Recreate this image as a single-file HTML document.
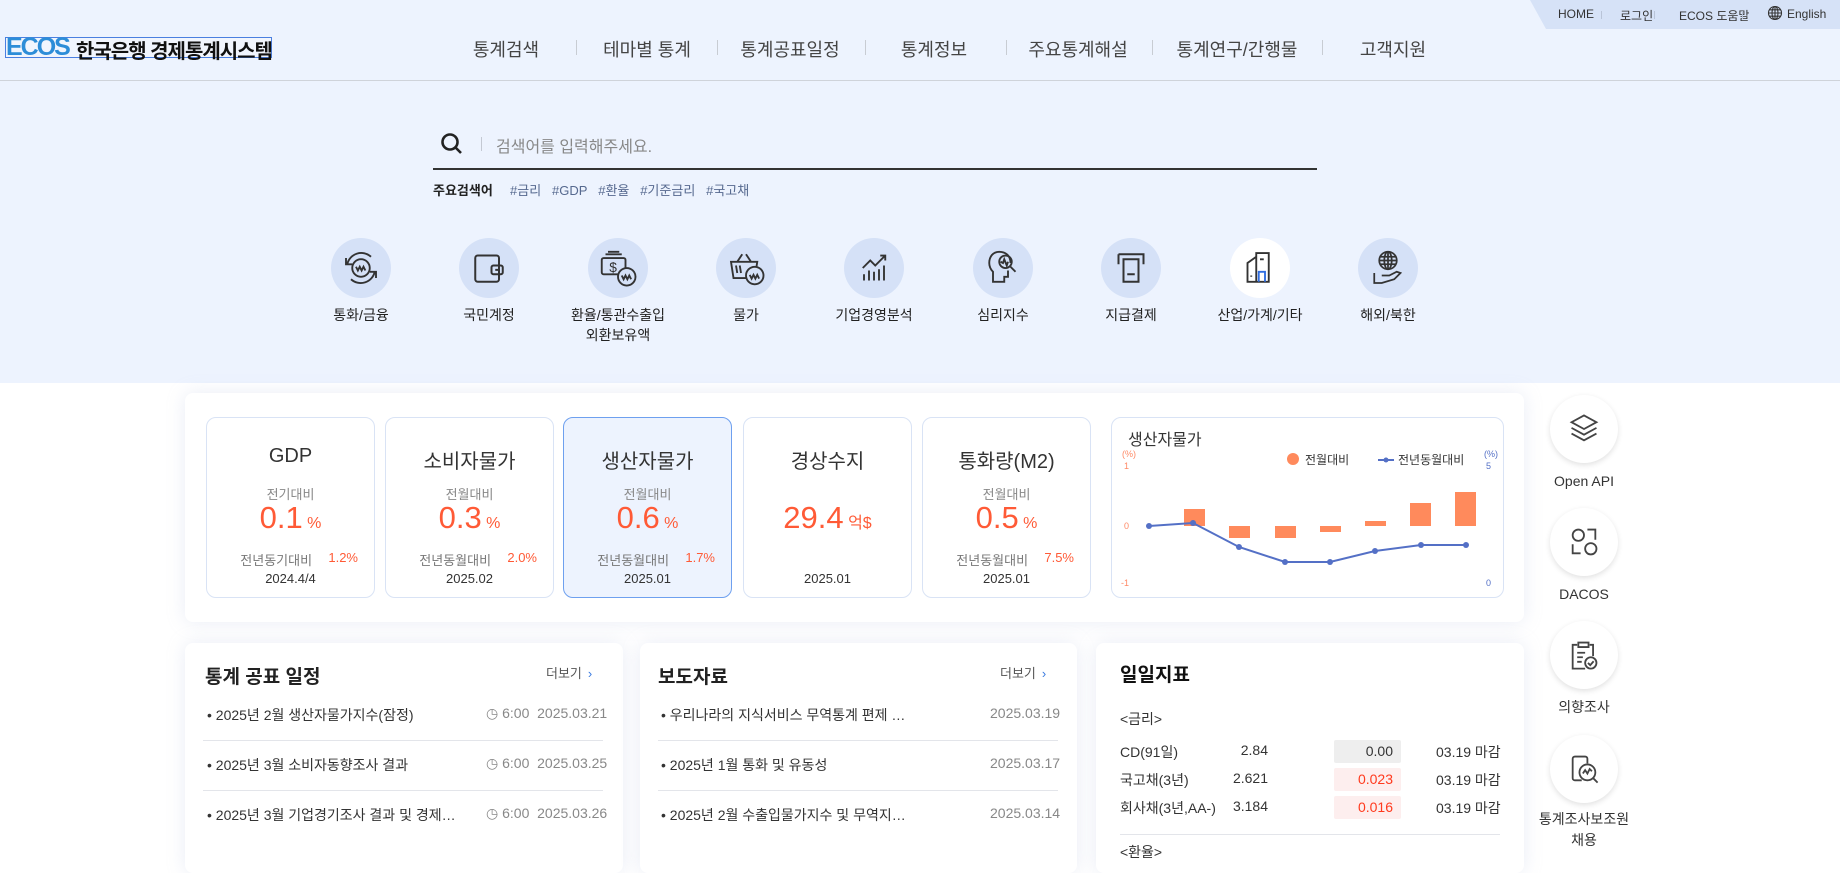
<!DOCTYPE html>
<html><head><meta charset="utf-8">
<style>
*{margin:0;padding:0;box-sizing:border-box}
body{width:1840px;height:859px;overflow:hidden;background:#fff;font-family:"Liberation Sans","Noto Sans CJK KR",sans-serif;color:#333;position:relative}
.a{position:absolute;white-space:nowrap}
.hero{position:absolute;left:0;top:0;width:1840px;height:383px;background:#edf3fe}
.hdrline{position:absolute;left:0;top:80px;width:1840px;height:1px;background:#cfd3da}
.util{position:absolute;left:1530px;top:0;width:310px;height:29px;background:#d6e2f7;clip-path:polygon(0 0,100% 0,100% 100%,16px 100%)}
.usep{position:absolute;top:11px;width:1px;height:8px;background:#b9c4d8}
.nav{position:absolute;top:36px;font-size:18px;color:#444;transform:translateX(-50%)}
.nsep{position:absolute;top:40px;width:1px;height:15px;background:#c8ccd3}
.circ{position:absolute;width:60px;height:60px;border-radius:50%;background:#d5e1f7;transform:translate(-50%,-50%)}
.circ svg{position:absolute;left:10px;top:10px;width:40px;height:40px}
.lbl{position:absolute;font-size:14px;color:#222;transform:translateX(-50%);text-align:center;line-height:20px}
.panel{position:absolute;background:#fff;border-radius:8px;box-shadow:0 0 18px rgba(170,185,220,.25)}
.card{position:absolute;top:417px;width:169px;height:181px;border:1px solid #d9e3f5;border-radius:10px;background:#fff;text-align:center}
.card.on{background:#edf3fe;border-color:#6ea0ef}
.card .t{position:absolute;left:0;right:0;top:27px;font-size:20px;color:#333}
.card .s{position:absolute;left:0;right:0;top:66px;font-size:13px;color:#888}
.card .v{position:absolute;left:0;right:0;top:82px;font-size:31px;color:#ff5a36}
.card .v small{font-size:16px}
.card .y{position:absolute;left:17px;right:16px;top:132px;font-size:13px;color:#777}
.card .y b{float:right;font-weight:normal;color:#ff5a36}
.card .d{position:absolute;left:0;right:0;top:153px;font-size:13px;color:#333}
.ptitle{position:absolute;font-size:19px;color:#222;font-weight:bold}
.more{position:absolute;font-size:13px;color:#555}
.more i{font-style:normal;color:#3a7be0;margin-left:6px}
.item{position:absolute;font-size:14px;color:#333}
.gray{color:#888}
.sep{position:absolute;height:1px;background:#e3e5ea}
.ql{position:absolute;width:68px;height:68px;border-radius:50%;background:#fff;box-shadow:0 2px 6px rgba(0,0,0,.12);transform:translate(-50%,-50%)}
.ql svg{position:absolute;left:17px;top:17px;width:34px;height:34px}
.qlt{position:absolute;font-size:14px;color:#333;transform:translateX(-50%);text-align:center;line-height:21px}
.dr{position:absolute;font-size:14px;color:#333}
.box{position:absolute;width:67px;height:23px;text-align:right;padding-right:8px;line-height:23px;font-size:14px;border-radius:2px}
</style></head><body>
<div class="hero"></div>
<div class="hdrline"></div>
<div class="util"></div>
<span class="a" style="left:1558px;top:7px;font-size:12px">HOME</span>
<div class="usep" style="left:1601px"></div>
<span class="a" style="left:1620px;top:7px;font-size:12px">로그인</span>
<div class="usep" style="left:1654px"></div>
<span class="a" style="left:1679px;top:7px;font-size:12px">ECOS 도움말</span>
<div class="usep" style="left:1742px"></div>
<svg class="a" style="left:1767px;top:5px" width="16" height="16" viewBox="0 0 16 16" fill="none" stroke="#333" stroke-width="1.1"><circle cx="8" cy="8" r="6.5"/><ellipse cx="8" cy="8" rx="3" ry="6.5"/><path d="M1.5 8h13M2.5 4.8h11M2.5 11.2h11M8 1.5v13"/></svg>
<span class="a" style="left:1787px;top:7px;font-size:12px">English</span>

<div class="a" style="left:5px;top:37px;width:267px;height:21px;border:1px solid #4a7fe0;background:#f1f5fd"></div>
<span class="a" style="left:6px;top:34px;font-size:25px;line-height:26px;font-weight:bold;color:#2d8dd8;letter-spacing:-2px">ECOS</span>
<span class="a" style="left:76px;top:35px;font-size:20px;color:#111;letter-spacing:-1px;font-weight:bold">한국은행 경제통계시스템</span>

<span class="nav" style="left:506px">통계검색</span>
<div class="nsep" style="left:576px"></div>
<span class="nav" style="left:647px">테마별 통계</span>
<div class="nsep" style="left:717px"></div>
<span class="nav" style="left:790px">통계공표일정</span>
<div class="nsep" style="left:865px"></div>
<span class="nav" style="left:934px">통계정보</span>
<div class="nsep" style="left:1006px"></div>
<span class="nav" style="left:1078px">주요통계해설</span>
<div class="nsep" style="left:1152px"></div>
<span class="nav" style="left:1237px">통계연구/간행물</span>
<div class="nsep" style="left:1322px"></div>
<span class="nav" style="left:1393px">고객지원</span>

<svg class="a" style="left:440px;top:132px" width="24" height="24" viewBox="0 0 24 24" fill="none" stroke="#222" stroke-width="2.6"><circle cx="10" cy="10" r="7.5"/><path d="M15.5 15.5l5.5 5.5"/></svg>
<div class="a" style="left:481px;top:137px;width:1px;height:14px;background:#c4c9d3"></div>
<span class="a" style="left:496px;top:133px;font-size:16px;color:#888">검색어를 입력해주세요.</span>
<div class="a" style="left:433px;top:168px;width:884px;height:2px;background:#333"></div>
<span class="a" style="left:433px;top:180px;font-size:13px;color:#222;font-weight:bold">주요검색어</span>
<span class="a" style="left:510px;top:180px;font-size:13px;color:#56698f">#금리&nbsp;&nbsp; #GDP&nbsp;&nbsp; #환율&nbsp;&nbsp; #기준금리&nbsp;&nbsp; #국고채</span>

<div class="circ" style="left:361px;top:268px"><svg viewBox="0 0 32 32" fill="none" stroke="#333" stroke-width="1.5"><circle cx="16" cy="16" r="7"/><path d="M5 13a11.5 11.5 0 0 1 19-6M27 19a11.5 11.5 0 0 1-19 6M4 8v5h5M28 24v-5h-5M12 15l1.5 3 1.5-3 1.5 3 1.5-3 1.5 3"/></svg></div>
<div class="circ" style="left:489px;top:268px"><svg viewBox="0 0 32 32" fill="none" stroke="#333" stroke-width="1.6"><rect x="5" y="6" width="19" height="21" rx="2"/><rect x="18" y="14" width="9" height="7" rx="1.5"/><path d="M21 17.5h3"/></svg></div>
<div class="circ" style="left:618px;top:268px"><svg viewBox="0 0 32 32" fill="none" stroke="#333" stroke-width="1.5"><rect x="3" y="8" width="19" height="13" rx="1.5"/><path d="M6 5h13M8 3h9"/><text x="9" y="19" font-size="11" fill="#333" stroke="none" font-family="Liberation Sans">$</text><circle cx="23" cy="23" r="7" fill="#d5e1f7"/><path d="M19 22l1.5 3 1.5-3 1.5 3 1.5-3 1.5 3"/></svg></div>
<div class="circ" style="left:746px;top:268px"><svg viewBox="0 0 32 32" fill="none" stroke="#333" stroke-width="1.5"><path d="M4 11h21l-2 13H6zM9 11l4-6M20 11l-4-6M8 14l1 6M11 14l1 6"/><circle cx="23" cy="22" r="7" fill="#d5e1f7"/><path d="M19 21.5l1.5 3 1.5-3 1.5 3 1.5-3 1.5 3"/></svg></div>
<div class="circ" style="left:874px;top:268px"><svg viewBox="0 0 32 32" fill="none" stroke="#333" stroke-width="1.5"><path d="M7 16l6-6 4 4 8-8M21 6h4v4M8 26v-5M12 26v-8M16 26v-7M20 26v-9M24 26v-12"/></svg></div>
<div class="circ" style="left:1003px;top:268px"><svg viewBox="0 0 32 32" fill="none" stroke="#333" stroke-width="1.5"><path d="M22 12c0-6-4-9-9-9S5 7 5 12c0 3 1 5 3 7v8h9v-4h3v-5"/><circle cx="18" cy="11" r="5"/><path d="M22 15l4 4M14 11l2 1 1-3 2 5 1-3"/></svg></div>
<div class="circ" style="left:1131px;top:268px"><svg viewBox="0 0 32 32" fill="none" stroke="#333" stroke-width="1.6"><path d="M6 5h20v8M6 5v8M10 9h12v18h-12zM13 21h6"/></svg></div>
<div class="circ" style="left:1260px;top:268px;background:#fff"><svg viewBox="0 0 32 32" fill="none" stroke="#333" stroke-width="1.5"><path d="M13 4h10v23H6V12l7-5zM13 4v23"/><path d="M16 9h3M9 22v1" /><path d="M15 27v-8h5v8" stroke="#2f6de0"/></svg></div>
<div class="circ" style="left:1388px;top:268px"><svg viewBox="0 0 32 32" fill="none" stroke="#333" stroke-width="1.4"><circle cx="16" cy="10" r="7"/><ellipse cx="16" cy="10" rx="3" ry="7"/><path d="M9 10h14M16 3v14M10 7h12M10 13h12M5 20v8h6l10-3 5-5-3-1-6 3h-6"/></svg></div>

<span class="lbl" style="left:361px;top:305px">통화/금융</span>
<span class="lbl" style="left:489px;top:305px">국민계정</span>
<span class="lbl" style="left:618px;top:305px">환율/통관수출입<br>외환보유액</span>
<span class="lbl" style="left:746px;top:305px">물가</span>
<span class="lbl" style="left:874px;top:305px">기업경영분석</span>
<span class="lbl" style="left:1003px;top:305px">심리지수</span>
<span class="lbl" style="left:1131px;top:305px">지급결제</span>
<span class="lbl" style="left:1260px;top:305px">산업/가계/기타</span>
<span class="lbl" style="left:1388px;top:305px">해외/북한</span>

<div class="panel" style="left:185px;top:393px;width:1339px;height:229px"></div>
<div class="card" style="left:206px"><div class="t">GDP</div><div class="s">전기대비</div><div class="v">0.1<small> %</small></div><div class="y">전년동기대비<b>1.2%</b></div><div class="d">2024.4/4</div></div>
<div class="card" style="left:385px"><div class="t">소비자물가</div><div class="s">전월대비</div><div class="v">0.3<small> %</small></div><div class="y">전년동월대비<b>2.0%</b></div><div class="d">2025.02</div></div>
<div class="card on" style="left:563px"><div class="t">생산자물가</div><div class="s">전월대비</div><div class="v">0.6<small> %</small></div><div class="y">전년동월대비<b>1.7%</b></div><div class="d">2025.01</div></div>
<div class="card" style="left:743px"><div class="t">경상수지</div><div class="v">29.4<small> 억$</small></div><div class="d">2025.01</div></div>
<div class="card" style="left:922px"><div class="t">통화량(M2)</div><div class="s">전월대비</div><div class="v">0.5<small> %</small></div><div class="y">전년동월대비<b>7.5%</b></div><div class="d">2025.01</div></div>
<div class="card" style="left:1111px;width:393px;text-align:left">
<span class="a" style="left:16px;top:8px;font-size:16px;color:#333">생산자물가</span>
</div>
<svg class="a" style="left:1111px;top:417px" width="393" height="181" viewBox="1111 417 393 181">
<g font-family="Liberation Sans" font-size="9">
<text x="1122" y="457" fill="#ff8a66">(%)</text><text x="1124" y="469" fill="#ff8a66">1</text><text x="1124" y="529" fill="#ff8a66">0</text><text x="1121" y="586" fill="#ff8a66">-1</text>
<text x="1484" y="457" fill="#5470c6">(%)</text><text x="1486" y="469" fill="#5470c6">5</text><text x="1486" y="586" fill="#5470c6">0</text>
</g>
<circle cx="1293" cy="459" r="6" fill="#ff8a5c"/>
<text x="1305" y="464" font-size="12" fill="#333" font-family="Liberation Sans, Noto Sans CJK KR">전월대비</text>
<path d="M1378 460h16" stroke="#5470c6" stroke-width="2"/><circle cx="1386" cy="460" r="2.5" fill="#5470c6"/>
<text x="1398" y="464" font-size="12" fill="#333" font-family="Liberation Sans, Noto Sans CJK KR">전년동월대비</text>
<g fill="#ff8a5c">
<rect x="1184" y="509" width="21" height="17"/><rect x="1229" y="526" width="21" height="12"/><rect x="1275" y="526" width="21" height="12"/><rect x="1320" y="526" width="21" height="6"/><rect x="1365" y="521" width="21" height="5"/><rect x="1410" y="503" width="21" height="23"/><rect x="1455" y="492" width="21" height="34"/>
</g>
<polyline points="1149,526 1193,523 1239,547 1285,562 1330,562 1375,551 1421,545 1466,545" fill="none" stroke="#5470c6" stroke-width="2"/>
<g fill="#5470c6"><circle cx="1149" cy="526" r="3"/><circle cx="1193" cy="523" r="3"/><circle cx="1239" cy="547" r="3"/><circle cx="1285" cy="562" r="3"/><circle cx="1330" cy="562" r="3"/><circle cx="1375" cy="551" r="3"/><circle cx="1421" cy="545" r="3"/><circle cx="1466" cy="545" r="3"/></g>
</svg>

<div class="panel" style="left:185px;top:643px;width:438px;height:230px"></div>
<div class="panel" style="left:640px;top:643px;width:437px;height:230px"></div>
<div class="panel" style="left:1096px;top:643px;width:428px;height:230px"></div>

<span class="ptitle" style="left:205px;top:662px">통계 공표 일정</span>
<span class="more" style="left:546px;top:663px">더보기<i>›</i></span>
<span class="item" style="left:207px;top:705px">• 2025년 2월 생산자물가지수(잠정)</span>
<span class="item" style="left:207px;top:755px">• 2025년 3월 소비자동향조사 결과</span>
<span class="item" style="left:207px;top:805px">• 2025년 3월 기업경기조사 결과 및 경제…</span>
<span class="item gray" style="left:486px;top:705px">◷ 6:00 &nbsp;2025.03.21</span>
<span class="item gray" style="left:486px;top:755px">◷ 6:00 &nbsp;2025.03.25</span>
<span class="item gray" style="left:486px;top:805px">◷ 6:00 &nbsp;2025.03.26</span>
<div class="sep" style="left:203px;top:740px;width:400px"></div>
<div class="sep" style="left:203px;top:790px;width:400px"></div>

<span class="ptitle" style="left:658px;top:662px">보도자료</span>
<span class="more" style="left:1000px;top:663px">더보기<i>›</i></span>
<span class="item" style="left:661px;top:705px">• 우리나라의 지식서비스 무역통계 편제 …</span>
<span class="item" style="left:661px;top:755px">• 2025년 1월 통화 및 유동성</span>
<span class="item" style="left:661px;top:805px">• 2025년 2월 수출입물가지수 및 무역지…</span>
<span class="item gray" style="left:990px;top:705px">2025.03.19</span>
<span class="item gray" style="left:990px;top:755px">2025.03.17</span>
<span class="item gray" style="left:990px;top:805px">2025.03.14</span>
<div class="sep" style="left:658px;top:740px;width:400px"></div>
<div class="sep" style="left:658px;top:790px;width:400px"></div>

<span class="ptitle" style="left:1120px;top:660px;color:#111">일일지표</span>
<span class="dr" style="left:1120px;top:709px">&lt;금리&gt;</span>
<span class="dr" style="left:1120px;top:742px">CD(91일)</span>
<span class="dr" style="left:1120px;top:770px">국고채(3년)</span>
<span class="dr" style="left:1120px;top:798px">회사채(3년,AA-)</span>
<span class="dr" style="left:1228px;top:742px;width:40px;text-align:right">2.84</span>
<span class="dr" style="left:1218px;top:770px;width:50px;text-align:right">2.621</span>
<span class="dr" style="left:1218px;top:798px;width:50px;text-align:right">3.184</span>
<div class="box" style="left:1334px;top:740px;background:#eeeeee;color:#333">0.00</div>
<div class="box" style="left:1334px;top:768px;background:#fdeeee;color:#ff3a1e">0.023</div>
<div class="box" style="left:1334px;top:796px;background:#fdeeee;color:#ff3a1e">0.016</div>
<span class="dr" style="left:1436px;top:742px">03.19 마감</span>
<span class="dr" style="left:1436px;top:770px">03.19 마감</span>
<span class="dr" style="left:1436px;top:798px">03.19 마감</span>
<div class="sep" style="left:1120px;top:834px;width:380px"></div>
<span class="dr" style="left:1120px;top:842px">&lt;환율&gt;</span>

<div class="ql" style="left:1584px;top:429px"><svg viewBox="0 0 30 30" fill="none" stroke="#444" stroke-width="1.6"><path d="M15 3l11 6-11 6-11-6zM4 14l11 6 11-6M4 19l11 6 11-6"/></svg></div>
<span class="qlt" style="left:1584px;top:471px">Open API</span>
<div class="ql" style="left:1584px;top:542px"><svg viewBox="0 0 30 30" fill="none" stroke="#444" stroke-width="1.6"><circle cx="10" cy="9" r="5"/><path d="M18 4h7v9M5 17v8h7"/><circle cx="21" cy="21" r="5"/></svg></div>
<span class="qlt" style="left:1584px;top:584px">DACOS</span>
<div class="ql" style="left:1584px;top:655px"><svg viewBox="0 0 30 30" fill="none" stroke="#444" stroke-width="1.6"><path d="M16 27H5V6h4M20 6h3v10M10 4h9v4h-9zM9 13h7M9 17h5M9 21h4"/><circle cx="21" cy="22" r="5"/><path d="M18.5 22l2 2 3-3.5"/></svg></div>
<span class="qlt" style="left:1584px;top:697px">의향조사</span>
<div class="ql" style="left:1584px;top:769px"><svg viewBox="0 0 30 30" fill="none" stroke="#444" stroke-width="1.6"><path d="M13 25H7a2 2 0 0 1-2-2V6a2 2 0 0 1 2-2h9a2 2 0 0 1 2 2v4"/><circle cx="18" cy="18" r="7"/><path d="M23 23l4 4M14 19l2-3 2 3 2-4 2 2"/></svg></div>
<span class="qlt" style="left:1584px;top:809px">통계조사보조원<br>채용</span>
</body></html>
